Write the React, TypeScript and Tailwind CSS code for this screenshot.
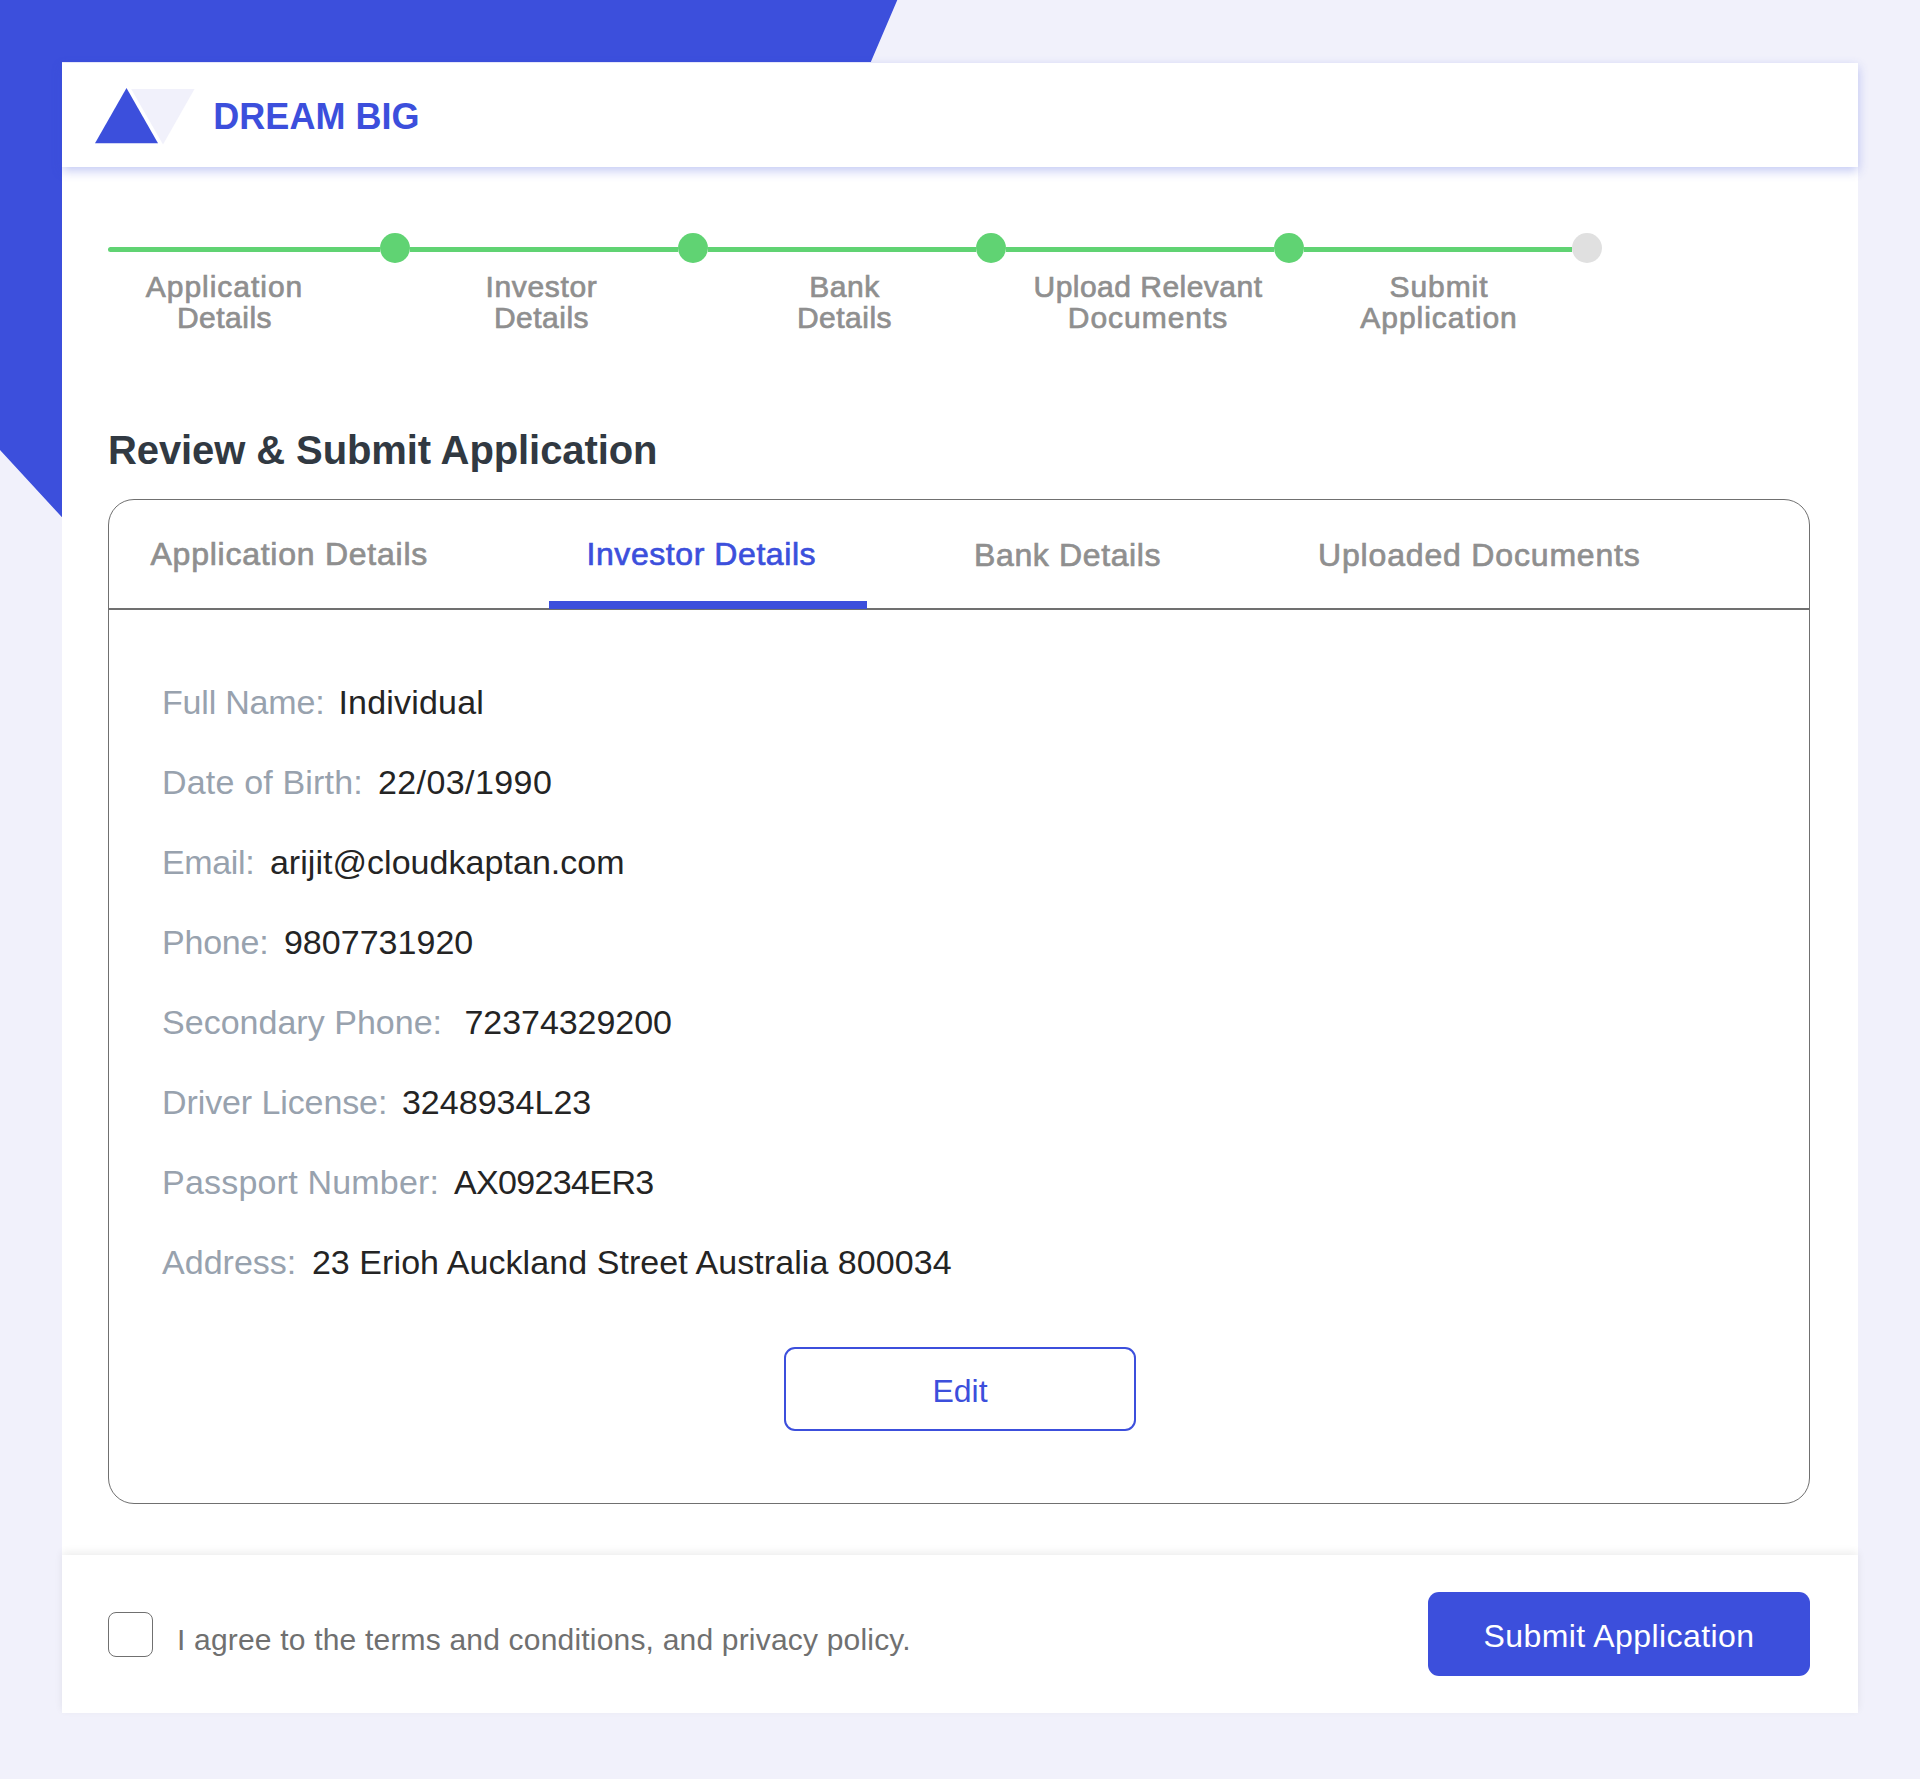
import React from "react";

const steps = [
  { cell: "w-[232px] pl-px", lines: [["Application", "tracking-[0.97px]"], ["Details", "tracking-[0.5px]"]] },
  { cell: "w-[403px]", lines: [["Investor", "tracking-[0.67px]"], ["Details", "tracking-[0.5px]"]] },
  { cell: "w-[203px]", lines: [["Bank", "tracking-[0.5px]"], ["Details", "tracking-[0.5px]"]] },
  { cell: "w-[404px]", lines: [["Upload Relevant", "tracking-[0.48px]"], ["Documents", "tracking-[0.95px]"]] },
  { cell: "w-[178px]", lines: [["Submit", "tracking-[0.9px]"], ["Application", "tracking-[0.97px]"]] },
];

const segments = [
  { line: "w-[272px] rounded-l-full", dot: "bg-[#60d373]" },
  { line: "w-[268px]", dot: "bg-[#60d373]" },
  { line: "w-[268px]", dot: "bg-[#60d373]" },
  { line: "w-[268px]", dot: "bg-[#60d373]" },
  { line: "w-[268px]", dot: "bg-[#e0e0e0]" },
];

const tabs = [
  { label: "Application Details", cell: "w-[440px] pl-[41.5px] pt-[34px] tracking-[0.75px]", active: false },
  { label: "Investor Details", cell: "w-[318px] pl-[37.5px] pt-[34px] tracking-[0.57px]", active: true },
  { label: "Bank Details", cell: "w-[344px] pl-[107px] pt-[35px] tracking-[0.63px]", active: false },
  { label: "Uploaded Documents", cell: "flex-1 pl-[107px] pt-[35px] tracking-[0.83px]", active: false },
];

const details = [
  { label: "Full Name:", l: "w-[176.4px] tracking-[-0.2px]", value: "Individual", v: "tracking-[0.2px]" },
  { label: "Date of Birth:", l: "w-[215.9px] tracking-[0.18px]", value: "22/03/1990", v: "tracking-[0.42px]" },
  { label: "Email:", l: "w-[107.9px] tracking-[-0.35px]", value: "arijit@cloudkaptan.com", v: "tracking-[0.04px]" },
  { label: "Phone:", l: "w-[121.9px] tracking-[-0.22px]", value: "9807731920", v: "tracking-[0.03px]" },
  { label: "Secondary Phone:", l: "w-[302.5px] tracking-[0.02px]", value: "72374329200", v: "tracking-[-0.06px]" },
  { label: "Driver License:", l: "w-[239.9px] tracking-[-0.1px]", value: "3248934L23", v: "tracking-[0.03px]" },
  { label: "Passport Number:", l: "w-[292px] tracking-[0.2px]", value: "AX09234ER3", v: "tracking-[-0.65px]" },
  { label: "Address:", l: "w-[149.9px] tracking-[0.02px]", value: "23 Erioh Auckland Street Australia 800034", v: "tracking-[0.07px]" },
];

function Header() {
  return (
    <header className="relative z-10 flex h-[104px] items-center bg-white pl-[33px] shadow-[0_4px_10px_rgba(60,79,220,0.3)]">
      <svg width="100" height="57" viewBox="0 0 100 57" className="mt-[3px]">
        <path d="M31.5 0 63 55.2H0Z" fill="#3c4fdc" />
        <path d="M36.2 1H99.5L68 56.5Z" fill="#f1f1fb" />
      </svg>
      <div className="mt-[3px] ml-[18.3px] text-[36px] leading-10 font-bold tracking-[0.03px] text-[#3c4fdc]">DREAM BIG</div>
    </header>
  );
}

function Progress() {
  return (
    <>
      <div className="flex items-start">
        {segments.map((s, i) => (
          <React.Fragment key={i}>
            <div className={`mt-[14px] h-[5px] bg-[#60d373] ${s.line}`} />
            <div className={`size-[30px] rounded-full ${s.dot}`} />
          </React.Fragment>
        ))}
      </div>
      <div className="mt-2 flex text-center text-[30px] leading-[31px] text-[#8f8f8f] [-webkit-text-stroke:0.7px_#8f8f8f]">
        {steps.map((s, i) => (
          <div key={i} className={s.cell}>
            {s.lines.map(([text, tracking]) => (
              <div key={text} className={tracking}>{text}</div>
            ))}
          </div>
        ))}
      </div>
    </>
  );
}

export default function App() {
  return (
    <div className="relative h-[1779px] w-[1920px] overflow-hidden bg-[#f1f1fb] pt-[63px] pl-[62px] font-['Liberation_Sans',Arial,sans-serif]">
      <svg width="900" height="520" viewBox="0 0 900 520" className="absolute top-0 left-0">
        <path d="M0 0H897.3L870.8 62H62V517.3L0 450Z" fill="#3c4fdc" />
      </svg>
      <div className="relative w-[1796px] bg-white">
        <Header />
        <main className="h-[1388px] pt-[66px] pl-[46px]">
          <Progress />
          <h1 className="mt-[93px] text-[40px] leading-[48px] font-bold tracking-[-0.095px] text-[#313942]">Review &amp; Submit Application</h1>
          <section className="mt-[25px] h-[1005px] w-[1702px] rounded-[26px] border border-[#707070]">
            <nav className="flex h-[110px] border-b-2 border-[#707070] text-[32px] leading-10">
              {tabs.map((t) => (
                <div
                  key={t.label}
                  className={`relative whitespace-nowrap ${t.cell} ${
                    t.active
                      ? "text-[#3c4fdc] [-webkit-text-stroke:0.7px_#3c4fdc]"
                      : "text-[#8f8f8f] [-webkit-text-stroke:0.7px_#8f8f8f]"
                  }`}
                >
                  {t.label}
                  {t.active && <div className="absolute -bottom-px left-0 h-2 w-full bg-[#3c4fdc]" />}
                </div>
              ))}
            </nav>
            <dl className="pt-[52px] pl-[53px] text-[34px] leading-[80px]">
              {details.map((d) => (
                <div key={d.label} className="flex whitespace-nowrap">
                  <dt className={`shrink-0 text-[#98a2ae] ${d.l}`}>{d.label}</dt>
                  <dd className={`text-[#242424] ${d.v}`}>{d.value}</dd>
                </div>
              ))}
            </dl>
            <button className="mt-[45px] ml-[675px] flex h-[84px] w-[352px] items-center justify-center rounded-[11px] border-2 border-[#3c4fdc] pt-[3px] text-[32px] leading-10 text-[#3c4fdc]">
              Edit
            </button>
          </section>
        </main>
        <footer className="flex h-[158px] items-center justify-between bg-white pr-[48px] pl-[46px] shadow-[0_-3px_8px_rgba(0,0,0,0.07)]">
          <label className="flex items-center">
            <span className="size-[45px] rounded-[8px] border border-[#707070]" />
            <span className="mt-[12px] ml-6 text-[30px] leading-9 tracking-[0.19px] text-[#707070]">
              I agree to the terms and conditions, and privacy policy.
            </span>
          </label>
          <button className="flex h-[84px] w-[382px] items-center justify-center rounded-[11px] bg-[#3c4fdc] pt-[3px] text-[32px] leading-10 tracking-[0.43px] text-white">
            Submit Application
          </button>
        </footer>
      </div>
    </div>
  );
}
